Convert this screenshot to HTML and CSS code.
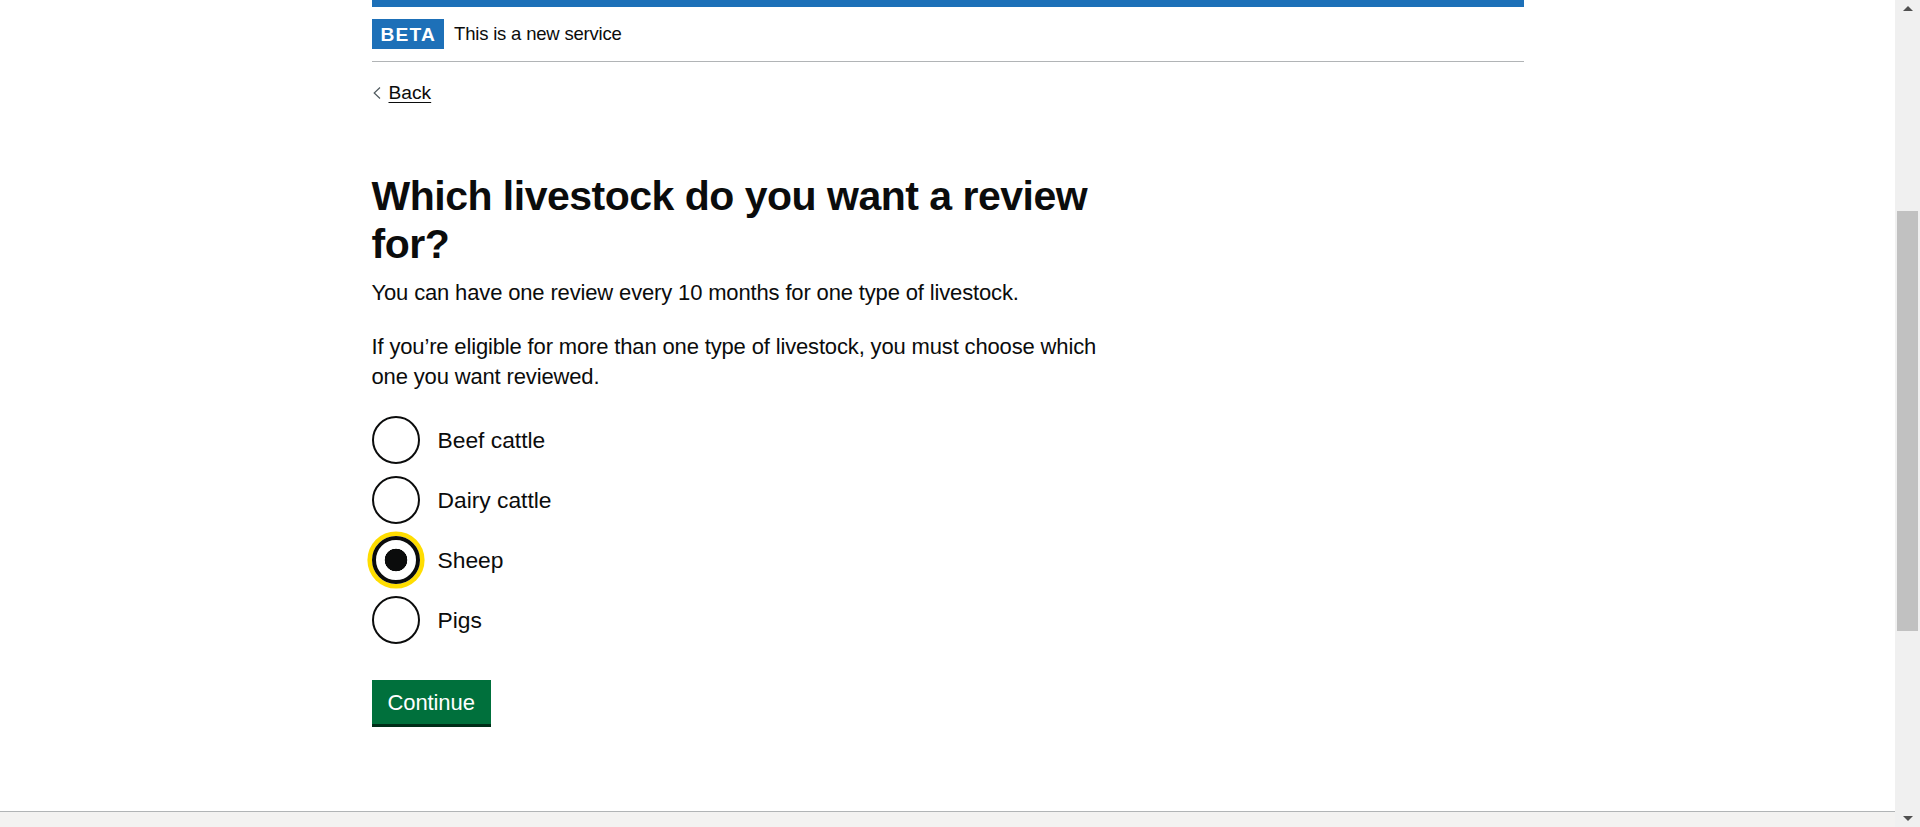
FILE: index.html
```html
<!DOCTYPE html>
<html lang="en">
<head>
<meta charset="utf-8">
<title>Which livestock do you want a review for?</title>
<link rel="stylesheet" href="styles.css">
</head>
<body>
<div class="viewport">
  <div class="page">
    <div class="container">
      <div class="header-bar"></div>
      <div class="phase-banner">
        <strong class="tag">Beta</strong>
        <span class="phase-text">This is a new service</span>
      </div>
      <a class="back-link" href="#"><svg class="back-chevron" width="8" height="12" viewBox="0 0 8 12"><polyline points="7,0.5 1.2,6 7,11.5" fill="none" stroke="#505a5f" stroke-width="1.2"/></svg>Back</a>
      <main class="main">
        <form class="column">
          <h1 class="heading">Which livestock do you want a review for?</h1>
          <p class="body-text">You can have one review every 10 months for one type of livestock.</p>
          <p class="body-text">If you’re eligible for more than one type of livestock, you must choose which one you want reviewed.</p>
          <div class="radios">
            <label class="radio-item"><input class="radio-input" type="radio" name="livestock" value="beef"><span class="radio-label">Beef cattle</span></label>
            <label class="radio-item"><input class="radio-input" type="radio" name="livestock" value="dairy"><span class="radio-label">Dairy cattle</span></label>
            <label class="radio-item"><input class="radio-input radio-focus" type="radio" name="livestock" value="sheep" checked><span class="radio-label">Sheep</span></label>
            <label class="radio-item"><input class="radio-input" type="radio" name="livestock" value="pigs"><span class="radio-label">Pigs</span></label>
          </div>
          <button class="button" type="button">Continue</button>
        </form>
      </main>
    </div>
  </div>
  <footer class="footer"></footer>
</div>
<div class="scrollbar">
  <div class="sb-button"><span class="sb-arrow-up"></span></div>
  <div class="sb-track"><div class="sb-thumb"></div></div>
  <div class="sb-button"><span class="sb-arrow-down"></span></div>
</div>
</body>
</html>
```
FILE: styles.css
```css
html, body {
  margin: 0;
  padding: 0;
  height: 827px;
  overflow: hidden;
}

body {
  display: flex;
  flex-direction: row;
  background: #ffffff;
  color: #0b0c0c;
  font-family: "Liberation Sans", Arial, sans-serif;
}

.viewport {
  flex: 1;
  display: flex;
  flex-direction: column;
  min-width: 0;
}

.page {
  flex: 1;
}

.container {
  width: 1152px;
  margin: 0 auto;
}

.header-bar {
  height: 7px;
  background: #1d70b8;
}

.phase-banner {
  display: flex;
  align-items: center;
  padding: 12px 0;
  border-bottom: 1px solid #b1b4b6;
}

.tag {
  display: inline-block;
  background: #1d70b8;
  color: #ffffff;
  font-weight: 700;
  font-size: 19.2px;
  line-height: 1;
  letter-spacing: 1.2px;
  text-transform: uppercase;
  padding: 6px 8px 4.8px 9px;
  margin-right: 10px;
}

.phase-text {
  font-size: 18.5px;
  letter-spacing: -0.2px;
  line-height: 24px;
}

.back-link {
  display: inline-flex;
  align-items: center;
  margin-top: 19px;
  font-size: 19.2px;
  line-height: 24px;
  color: #0b0c0c;
  text-decoration: underline;
  text-decoration-thickness: 1px;
  text-underline-offset: 3px;
}

.back-chevron {
  margin-left: 1px;
  margin-right: 8px;
}

.main {
  padding-top: 67px;
}

.column {
  width: 756px;
}

.heading {
  margin: 0 0 10px;
  font-size: 41px;
  line-height: 48px;
  font-weight: 700;
  letter-spacing: -0.5px;
}

.body-text {
  margin: 0 0 24px;
  font-size: 22px;
  line-height: 30px;
  letter-spacing: -0.15px;
}

.radios {
  display: flex;
  flex-direction: column;
  gap: 12px;
  margin-bottom: 36px;
}

.radio-item {
  display: flex;
  align-items: center;
  height: 48px;
}

.radio-input {
  appearance: none;
  -webkit-appearance: none;
  box-sizing: border-box;
  width: 48px;
  height: 48px;
  margin: 0;
  border: 2px solid #0b0c0c;
  border-radius: 50%;
  background: #ffffff;
  flex: none;
}

.radio-input:checked {
  background: radial-gradient(circle, #0b0c0c 0 11px, #ffffff 11.6px);
}

.radio-focus {
  border-width: 4.8px;
  box-shadow: 0 0 0 4.6px #ffdd00;
}

.radio-label {
  padding-left: 18px;
  font-size: 22.8px;
  line-height: 48px;
}

.button {
  display: inline-block;
  margin: 0;
  border: 2px solid transparent;
  border-radius: 0;
  padding: 9px 14px 8px;
  background: #00703c;
  color: #ffffff;
  font-family: "Liberation Sans", Arial, sans-serif;
  font-size: 22px;
  line-height: 23px;
  letter-spacing: -0.1px;
  box-shadow: 0 3px 0 #002d18;
  cursor: pointer;
}

.footer {
  height: 15px;
  border-top: 1px solid #b1b4b6;
  background: #f3f2f1;
}

.scrollbar {
  width: 25px;
  flex: none;
  display: flex;
  flex-direction: column;
  background: #f0f0f0;
}

.sb-button {
  height: 17px;
  display: flex;
  align-items: center;
  justify-content: center;
}

.sb-arrow-up {
  width: 0;
  height: 0;
  border-left: 5px solid transparent;
  border-right: 5px solid transparent;
  border-bottom: 5px solid #505050;
}

.sb-arrow-down {
  width: 0;
  height: 0;
  border-left: 5px solid transparent;
  border-right: 5px solid transparent;
  border-top: 5px solid #505050;
}

.sb-track {
  flex: 1;
  display: flex;
  flex-direction: column;
  align-items: center;
}

.sb-thumb {
  width: 21px;
  height: 420px;
  margin-top: 194px;
  background: #c1c1c1;
}
```
